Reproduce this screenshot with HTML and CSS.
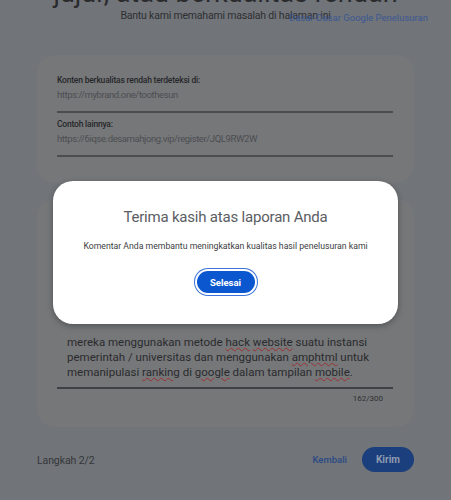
FILE: index.html
```html
<!DOCTYPE html>
<html lang="id">
<head>
<meta charset="utf-8">
<title>Laporan</title>
<link rel="stylesheet" href="styles.css">
</head>
<body>
<div class="page">
  <header class="head">
    <h1 class="title">jujur, atau berkualitas rendah</h1>
    <p class="subtitle">Bantu kami memahami masalah di halaman ini</p>
    <a class="help" href="#">Dasar-Dasar Google Penelusuran</a>
  </header>

  <section class="card card-urls">
    <div class="field">
      <div class="label">Konten berkualitas rendah terdeteksi di:</div>
      <div class="value">https://mybrand.one/toothesun</div>
    </div>
    <div class="field">
      <div class="label">Contoh lainnya:</div>
      <div class="value">https://6iqse.desamahjong.vip/register/JQL9RW2W</div>
    </div>
  </section>

  <section class="card card-comment">
    <div class="textarea">mereka menggunakan metode <span class="sp">hack</span> <span class="sp">website</span> suatu instansi pemerintah / universitas dan menggunakan <span class="sp">amphtml</span> untuk memanipulasi <span class="sp">ranking</span> di <span class="sp">google</span> dalam tampilan <span class="sp">mobile</span>.</div>
    <div class="counter">162/300</div>
  </section>

  <footer class="foot">
    <span class="step">Langkah 2/2</span>
    <div class="actions">
      <a class="back" href="#">Kembali</a>
      <button class="send" type="button">Kirim</button>
    </div>
  </footer>
</div>

<div class="dialog" role="dialog">
  <h2 class="dlg-title">Terima kasih atas laporan Anda</h2>
  <p class="dlg-text">Komentar Anda membantu meningkatkan kualitas hasil penelusuran kami</p>
  <button class="done" type="button">Selesai</button>
</div>
</body>
</html>
```

FILE: styles.css
```css
html, body {
  margin: 0;
  padding: 0;
}
body {
  width: 451px;
  height: 500px;
  overflow: hidden;
  background: #717479;
  font-family: Roboto, "Liberation Sans", sans-serif;
  position: relative;
}
.page {
  padding: 0 37px;
  display: flex;
  flex-direction: column;
}
.head {
  position: relative;
  text-align: center;
  height: 55px;
}
.title {
  margin: -23px 0 0;
  font-size: 27px;
  font-weight: 400;
  color: #2a2b2d;
  line-height: 32px;
  white-space: nowrap;
}
.subtitle {
  margin: -1px 0 0;
  font-size: 10.5px;
  letter-spacing: -0.2px;
  color: #2e2f31;
  line-height: 16px;
}
.help {
  position: absolute;
  right: -14px;
  top: 10px;
  font-size: 9.5px;
  color: #3b5893;
  text-decoration: none;
  line-height: 16px;
}
.card {
  background: #767779;
  border-radius: 18px;
}
.card-urls {
  height: 128px;
  box-sizing: border-box;
  padding: 18px 21px 0 20px;
  display: flex;
  flex-direction: column;
  gap: 4px;
}
.field {
  border-bottom: 2px solid #4c4d4f;
  padding-bottom: 9px;
}
.label {
  font-size: 8.5px;
  font-weight: 500;
  letter-spacing: -0.2px;
  color: #26272a;
  line-height: 14px;
}
.value {
  font-size: 9.5px;
  letter-spacing: -0.4px;
  color: #4c4e52;
  line-height: 14px;
  margin-top: 1px;
}
.card-comment {
  margin-top: 16px;
  height: 228px;
  box-sizing: border-box;
  padding: 136px 21px 0 20px;
}
.textarea {
  padding: 0 10px 7px;
  font-size: 11.5px;
  line-height: 15px;
  color: #2a2b2e;
  border-bottom: 2px solid #3f4043;
}
.sp {
  text-decoration: underline wavy #9c2f32;
  text-decoration-thickness: 1px;
  text-underline-offset: 1px;
}
.counter {
  text-align: right;
  font-size: 8px;
  color: #303134;
  padding: 4px 10px 0 0;
  line-height: 12px;
}
.foot {
  margin-top: 20px;
  height: 25px;
  display: flex;
  align-items: center;
  justify-content: space-between;
}
.step {
  font-size: 10.5px;
  letter-spacing: -0.1px;
  color: #35373a;
  margin-top: 2px;
}
.actions {
  display: flex;
  align-items: center;
  gap: 15px;
}
.back {
  font-size: 9.5px;
  font-weight: 500;
  color: #2b4a85;
  text-decoration: none;
}
.send {
  width: 52px;
  height: 25px;
  border: none;
  border-radius: 13px;
  background: #1b3e7c;
  color: #8f9bb0;
  font-family: inherit;
  font-size: 10px;
  font-weight: 700;
  padding: 0;
}
.dialog {
  position: absolute;
  left: 53px;
  top: 181px;
  width: 345px;
  height: 143px;
  box-sizing: border-box;
  background: #ffffff;
  border-radius: 20px;
  box-shadow: 0 2px 6px rgba(0, 0, 0, 0.3);
  display: flex;
  flex-direction: column;
  align-items: center;
  padding-top: 26px;
}
.dlg-title {
  margin: 0;
  font-size: 15px;
  letter-spacing: -0.2px;
  font-weight: 400;
  color: #5a5d62;
  line-height: 20px;
}
.dlg-text {
  margin: 12px 0 0;
  font-size: 8.7px;
  color: #3c4043;
  line-height: 14px;
}
.done {
  margin-top: 18px;
  width: 58px;
  height: 22px;
  border: none;
  border-radius: 11px;
  background: #0b57d0;
  color: #ffffff;
  font-family: inherit;
  font-size: 9.5px;
  font-weight: 700;
  padding: 0;
  box-shadow: 0 0 0 2px #ffffff, 0 0 0 3px #3a74d8;
}
```
